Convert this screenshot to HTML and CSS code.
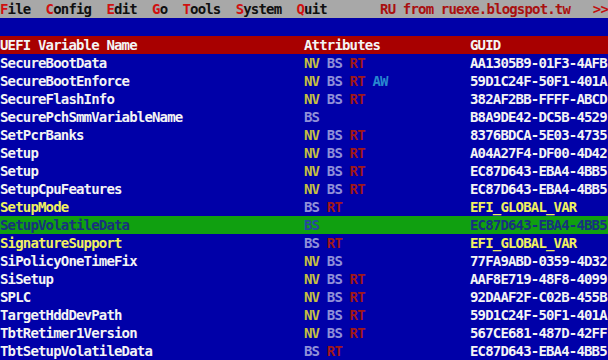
FILE: index.html
```html
<!DOCTYPE html>
<html>
<head>
<meta charset="utf-8">
<link rel="stylesheet" href="styles.css">
</head>
<body>
<div class="screen">
  <div class="menubar"><span class="hk">F</span>ile  <span class="hk">C</span>onfig  <span class="hk">E</span>dit  <span class="hk">G</span>o  <span class="hk">T</span>ools  <span class="hk">S</span>ystem  <span class="hk">Q</span>uit       <span class="credit">RU from ruexe.blogspot.tw</span>   <span class="more">&gt;&gt;</span></div>
  <div class="band"></div>
  <div class="row head"><span>UEFI Variable Name</span><span>Attributes</span><span>GUID</span></div>
  <div class="list">
    <div class="row"><span>SecureBootData</span><span class="attrs"><b class="nv">NV</b><b class="bs">BS</b><b class="rt">RT</b></span><span>AA1305B9-01F3-4AFB</span></div>
    <div class="row"><span>SecureBootEnforce</span><span class="attrs"><b class="nv">NV</b><b class="bs">BS</b><b class="rt">RT</b><b class="aw">AW</b></span><span>59D1C24F-50F1-401A</span></div>
    <div class="row"><span>SecureFlashInfo</span><span class="attrs"><b class="nv">NV</b><b class="bs">BS</b><b class="rt">RT</b></span><span>382AF2BB-FFFF-ABCD</span></div>
    <div class="row"><span>SecurePchSmmVariableName</span><span class="attrs"><b class="bs">BS</b></span><span>B8A9DE42-DC5B-4529</span></div>
    <div class="row"><span>SetPcrBanks</span><span class="attrs"><b class="nv">NV</b><b class="bs">BS</b><b class="rt">RT</b></span><span>8376BDCA-5E03-4735</span></div>
    <div class="row"><span>Setup</span><span class="attrs"><b class="nv">NV</b><b class="bs">BS</b><b class="rt">RT</b></span><span>A04A27F4-DF00-4D42</span></div>
    <div class="row"><span>Setup</span><span class="attrs"><b class="nv">NV</b><b class="bs">BS</b><b class="rt">RT</b></span><span>EC87D643-EBA4-4BB5</span></div>
    <div class="row"><span>SetupCpuFeatures</span><span class="attrs"><b class="nv">NV</b><b class="bs">BS</b><b class="rt">RT</b></span><span>EC87D643-EBA4-4BB5</span></div>
    <div class="row global"><span>SetupMode</span><span class="attrs"><b class="bs">BS</b><b class="rt">RT</b></span><span>EFI_GLOBAL_VAR</span></div>
    <div class="row selected"><span>SetupVolatileData</span><span class="attrs"><b class="bs">BS</b></span><span>EC87D643-EBA4-4BB5</span></div>
    <div class="row global"><span>SignatureSupport</span><span class="attrs"><b class="bs">BS</b><b class="rt">RT</b></span><span>EFI_GLOBAL_VAR</span></div>
    <div class="row"><span>SiPolicyOneTimeFix</span><span class="attrs"><b class="nv">NV</b><b class="bs">BS</b></span><span>77FA9ABD-0359-4D32</span></div>
    <div class="row"><span>SiSetup</span><span class="attrs"><b class="nv">NV</b><b class="bs">BS</b><b class="rt">RT</b></span><span>AAF8E719-48F8-4099</span></div>
    <div class="row"><span>SPLC</span><span class="attrs"><b class="nv">NV</b><b class="bs">BS</b><b class="rt">RT</b></span><span>92DAAF2F-C02B-455B</span></div>
    <div class="row"><span>TargetHddDevPath</span><span class="attrs"><b class="nv">NV</b><b class="bs">BS</b><b class="rt">RT</b></span><span>59D1C24F-50F1-401A</span></div>
    <div class="row"><span>TbtRetimer1Version</span><span class="attrs"><b class="nv">NV</b><b class="bs">BS</b><b class="rt">RT</b></span><span>567CE681-487D-42FF</span></div>
    <div class="row"><span>TbtSetupVolatileData</span><span class="attrs"><b class="bs">BS</b><b class="rt">RT</b></span><span>EC87D643-EBA4-4BB5</span></div>
  </div>
</div>
</body>
</html>
```
FILE: styles.css
```css
html, body {
  margin: 0;
  padding: 0;
  background: #0000a8;
}
.screen {
  width: 608px;
  height: 360px;
  overflow: hidden;
  background: #0000a8;
  font-family: "DejaVu Sans Mono", "Liberation Mono", monospace;
  font-weight: bold;
  font-size: 14px;
  letter-spacing: -0.83px;
  color: #f4f4f4;
}
.menubar {
  height: 18px;
  line-height: 18px;
  background: #a8a8a8;
  color: #101010;
  white-space: pre;
}
.hk { color: #d01010; }
.credit { color: #a81010; }
.more { color: #c01010; }
.band {
  height: 18px;
  background: #0000a8;
}
.row {
  display: grid;
  grid-template-columns: 304px 166px 1fr;
  height: 18px;
  line-height: 18px;
  white-space: pre;
}
.row.head {
  background: #a80000;
  color: #f4f4f4;
}
.attrs {
  display: flex;
}
.attrs b {
  width: 22.8px;
  font-weight: bold;
}
.nv { color: #c8c040; }
.bs { color: #9090d8; }
.rt { color: #a01818; }
.aw { color: #2888d0; }
.row.global { color: #f0f060; }
.row.selected {
  background: #10a010;
  color: #183080;
}
.row.selected .bs { color: #2848a0; }
```
